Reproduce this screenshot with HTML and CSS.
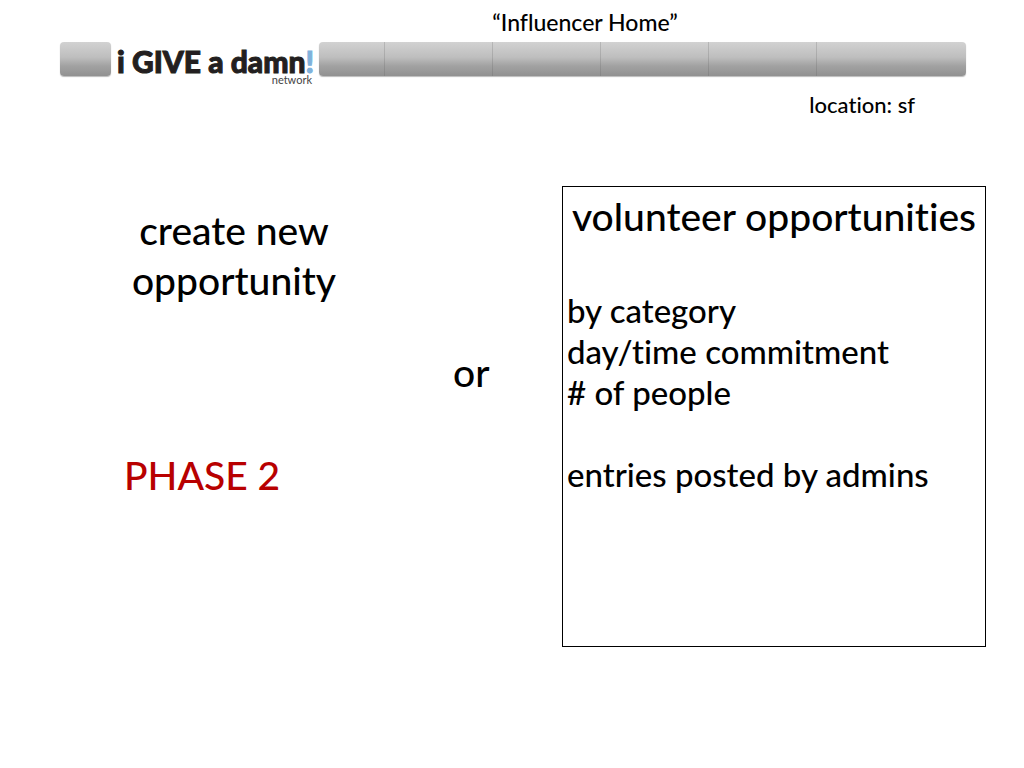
FILE: index.html
```html
<!DOCTYPE html>
<html lang="en">
<head>
<meta charset="utf-8">
<meta name="viewport" content="width=device-width, initial-scale=1">
<title>Influencer Home</title>
<link rel="stylesheet" href="styles.css">
</head>
<body>
<header class="header">
  <h1 class="page-title">“Influencer Home”</h1>
  <div class="bar">
    <div class="bar-start"></div>
    <div class="logo">
      <div class="logo-name">i GIVE a damn<span class="logo-mark">!</span></div>
      <div class="logo-sub">network</div>
    </div>
    <div class="bar-main">
      <span class="tab tab-first"></span>
      <span class="tab"></span>
      <span class="tab"></span>
      <span class="tab"></span>
      <span class="tab"></span>
      <span class="tab tab-last"></span>
    </div>
  </div>
  <p class="location">location: sf</p>
</header>
<main class="main">
  <section class="create">
    <h2 class="create-title">create new<br>opportunity</h2>
    <p class="phase">PHASE 2</p>
  </section>
  <p class="or">or</p>
  <section class="panel">
    <h2 class="panel-title">volunteer opportunities</h2>
    <ul class="panel-list">
      <li>by category</li>
      <li>day/time commitment</li>
      <li># of people</li>
    </ul>
    <p class="panel-note">entries posted by admins</p>
  </section>
</main>
</body>
</html>
```
FILE: styles.css
```css
* { box-sizing: border-box; }
body {
  margin: 0;
  background: #fff;
  color: #000;
  font-family: Lato, "Liberation Sans", sans-serif;
  font-weight: 500;
  font-variant-ligatures: none;
}
h1, h2, p, ul { margin: 0; padding: 0; font-weight: inherit; }
ul { list-style: none; }

.header { padding: 8px 58px 0 60px; }
.page-title {
  padding-left: 144px;
  font-size: 23px;
  line-height: 28px;
  text-align: center;
}
.bar { display: flex; align-items: flex-start; padding-top: 6px; }
.bar-start, .bar-main {
  height: 34px;
  border-radius: 4px;
  background: linear-gradient(#d2d2d2, #bebebe 45%, #a2a2a2 70%, #919191);
  box-shadow: 0 1px 1px #bbb;
}
.bar-start { width: 51px; }
.bar-main { display: flex; flex: 1; }
.tab { flex: 108 1 0; border-right: 1px solid rgba(90, 90, 90, .22); }
.tab-first { flex-grow: 65; }
.tab-last { flex-grow: 150; border-right: 0; }
.logo { width: 208px; padding: 5px 7px 0 6px; color: #231f20; }
.logo-name {
  font-size: 30px;
  font-weight: 900;
  line-height: 28px;
  white-space: nowrap;
  -webkit-text-stroke: 1px currentColor;
}
.logo-mark { color: #7fb2dc; }
.logo-sub { font-size: 11px; line-height: 10px; font-weight: 400; text-align: right; color: #444; }
.location {
  padding: 6px 51px 0 0;
  font-size: 22px;
  line-height: 28px;
  text-align: right;
}

.main {
  display: grid;
  grid-template-columns: 348fr 154fr 424fr;
  padding: 67px 38px 0 60px;
}
.create { padding-top: 19px; }
.create-title { font-size: 39px; line-height: 50px; text-align: center; }
.phase {
  padding: 145px 0 0 64px;
  font-size: 39px;
  line-height: 50px;
  color: #b80000;
}
.or { padding: 161px 0 0 45px; font-size: 39px; line-height: 50px; }
.panel {
  min-height: 461px;
  padding: 4px;
  border: 1px solid #000;
}
.panel-title { font-size: 39px; line-height: 50px; text-align: center; white-space: nowrap; }
.panel-list { padding-top: 49px; }
.panel-list, .panel-note { font-size: 33px; line-height: 41px; }
.panel-note { padding-top: 41px; }
```
